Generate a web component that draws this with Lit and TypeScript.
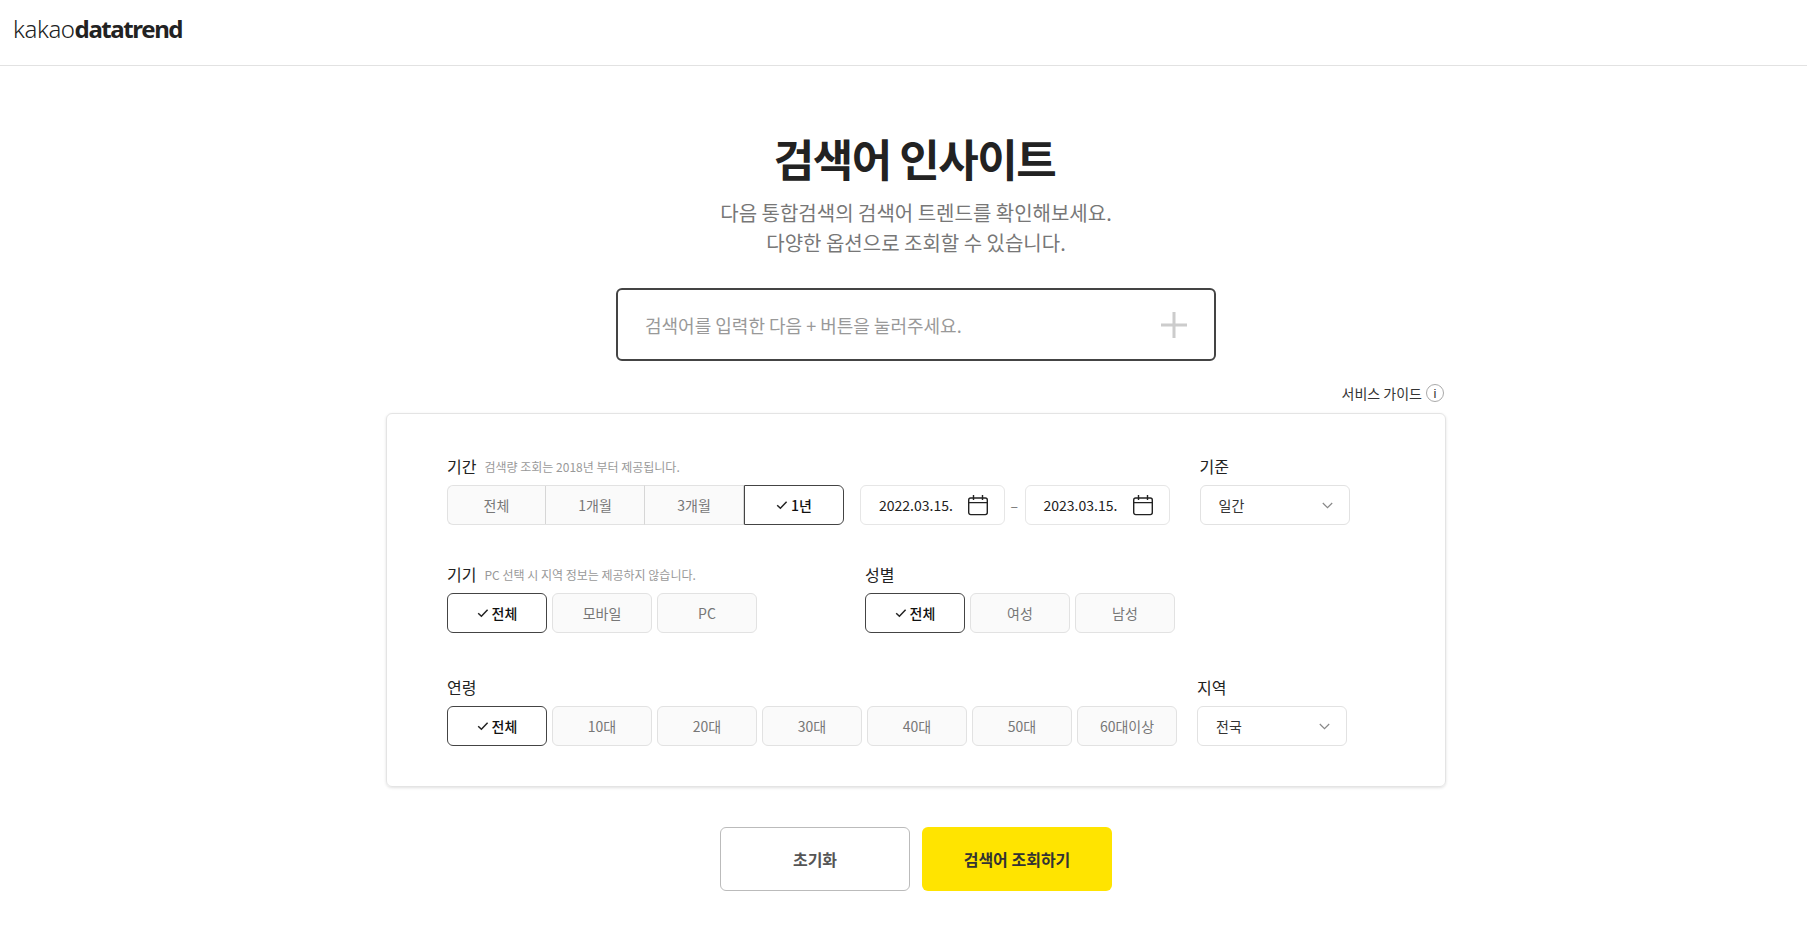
import { LitElement, html, css } from "lit";
import { customElement } from "lit/decorators.js";

const check = html`<svg class="chk" width="12" height="10" viewBox="0 0 12 10" fill="none"><path d="M1.2 5.2 L4.4 8.2 L10.6 1.8" stroke="#222" stroke-width="1.5"/></svg>`;
const chevron = html`<svg class="chev" width="11" height="7" viewBox="0 0 11 7" fill="none"><path d="M.8 1 L5.5 5.7 L10.2 1" stroke="#888" stroke-width="1.2"/></svg>`;
const calendar = html`<svg class="cal" width="22" height="22" viewBox="0 0 22 22" fill="none" stroke="#222" stroke-width="1.4"><rect x="1.7" y="4" width="18.6" height="16.6" rx="2"/><path d="M1.7 8.6 H20.3 M6.5 1 V6 M15.5 1 V6"/></svg>`;

@customElement("app-root")
export class AppRoot extends LitElement {
  static styles = css`
    :host { display: block; font-family: "Noto Sans CJK KR", "Noto Sans", sans-serif; color: #222; background: #fff; }
    * { box-sizing: border-box; }
    header { height: 66px; border-bottom: 1px solid #e2e2e2; padding: 0 0 8px 13px; display: flex; align-items: center; }
    .logo { font-family: "Noto Sans", sans-serif; font-size: 24px; letter-spacing: -0.4px; line-height: 32px; color: #222; font-weight: 300; }
    .logo b { font-weight: 700; letter-spacing: -1.4px; }
    main { width: 1060px; margin-left: 386px; }
    h1 { margin: 62px 0 0; padding-right: 3px; font-size: 44px; line-height: 60px; height: 60px; font-weight: 700; text-align: center; letter-spacing: -1.5px; color: #222; }
    .sub { margin: 10px 0 0; text-align: center; font-size: 20px; line-height: 30px; color: #777; font-weight: 400; }
    .search { width: 600px; height: 73px; margin: 30px auto 0; border: 2px solid #444; border-radius: 6px; display: flex; align-items: center; justify-content: space-between; padding: 0 26px 0 27px; }
    .search span { font-size: 18px; color: #999; }
    .guide { display: flex; justify-content: flex-end; align-items: center; gap: 4px; height: 33px; margin-top: 19px; padding-right: 2px; padding-bottom: 7px; font-size: 14px; color: #333; }
    .card { border: 1px solid #e4e4e4; border-radius: 6px; box-shadow: 0 1px 3px rgba(0,0,0,.12); padding: 40px 60px 39px; height: 374px; }
    .row { display: flex; align-items: flex-start; }
    .r1 { gap: 30px; margin-bottom: 37px; }
    .r2 { gap: 108px; margin-bottom: 42px; }
    .r3 { gap: 20px; }
    .lab { height: 31px; display: flex; align-items: flex-start; gap: 8px; font-size: 16px; line-height: 24px; color: #222; }
    .lab small { font-size: 12px; color: #999; line-height: 26px; }
    .ctl { display: flex; align-items: center; }
    .btns { gap: 5px; }
    .btn { width: 100px; height: 40px; border: 1px solid #e2e2e2; border-radius: 6px; background: #fafafa; color: #777; font-size: 14px; display: flex; align-items: center; justify-content: center; gap: 3px; }
    .btn.on { background: #fff; border-color: #444; color: #111; font-weight: 500; }
    .chk { flex: none; }
    .seg { width: 397px; gap: 0; }
    .seg .btn { width: 99px; border-radius: 0; border-left: none; border-right-color: #d6d6d6; }
    .seg .btn:first-child { border-left: 1px solid #e2e2e2; border-radius: 6px 0 0 6px; }
    .seg .btn:last-child { width: 100px; border-radius: 0 6px 6px 0; border-left: 1px solid #444; border-right-color: #444; }
    .date { width: 145px; height: 40px; border: 1px solid #e6e6e6; border-radius: 6px; display: flex; align-items: center; justify-content: space-between; padding: 0 15px 0 18px; font-size: 14px; color: #222; }
    .dash { width: 19.5px; padding-right: 1px; text-align: center; color: #777; font-size: 14px; }
    .dates { margin-left: 16px; }
    .sel { width: 150px; height: 40px; border: 1px solid #e2e2e2; border-radius: 6px; display: flex; align-items: center; justify-content: space-between; padding: 0 16px 0 18px; font-size: 14px; color: #333; }
    .info { width: 18px; height: 18px; border: 1px solid #aaa; border-radius: 50%; display: flex; align-items: center; justify-content: center; font-size: 13px; font-family: "Liberation Sans", sans-serif; line-height: 1; color: #333; }
    .actions { display: flex; gap: 12px; margin: 40px 0 0 334px; }
    .act { width: 190px; height: 64px; border-radius: 6px; display: flex; align-items: center; justify-content: center; font-size: 16px; font-weight: 700; }
    .reset { border: 1px solid #bbb; color: #555; background: #fff; }
    .go { background: #ffe400; color: #333; }
  `;

  private btns(items: string[], on: string, cls = "btns") {
    return html`<div class="ctl ${cls}">${items.map(i => html`<div class="btn ${i === on ? "on" : ""}">${i === on ? check : ""}<span>${i}</span></div>`)}</div>`;
  }

  render() {
    return html`
      <header><div class="logo">kakao<b>datatrend</b></div></header>
      <main>
        <h1>검색어 인사이트</h1>
        <p class="sub">다음 통합검색의 검색어 트렌드를 확인해보세요.<br>다양한 옵션으로 조회할 수 있습니다.</p>
        <div class="search"><span>검색어를 입력한 다음 + 버튼을 눌러주세요.</span>
          <svg width="28" height="28" viewBox="0 0 28 28"><path d="M14 1 V27 M1 14 H27" stroke="#ccc" stroke-width="3"/></svg></div>
        <div class="guide">서비스 가이드 <span class="info">i</span></div>
        <section class="card">
          <div class="row r1">
            <div>
              <div class="lab">기간 <small>검색량 조회는 2018년 부터 제공됩니다.</small></div>
              <div class="ctl">
                ${this.btns(["전체","1개월","3개월","1년"],"1년","seg")}
                <div class="ctl dates">
                  <div class="date">2022.03.15. ${calendar}</div><div class="dash">–</div><div class="date">2023.03.15. ${calendar}</div>
                </div>
              </div>
            </div>
            <div><div class="lab">기준</div><div class="sel">일간 ${chevron}</div></div>
          </div>
          <div class="row r2">
            <div><div class="lab">기기 <small>PC 선택 시 지역 정보는 제공하지 않습니다.</small></div>${this.btns(["전체","모바일","PC"],"전체")}</div>
            <div><div class="lab">성별</div>${this.btns(["전체","여성","남성"],"전체")}</div>
          </div>
          <div class="row r3">
            <div><div class="lab">연령</div>${this.btns(["전체","10대","20대","30대","40대","50대","60대이상"],"전체")}</div>
            <div><div class="lab">지역</div><div class="sel">전국 ${chevron}</div></div>
          </div>
        </section>
        <div class="actions"><div class="act reset">초기화</div><div class="act go">검색어 조회하기</div></div>
      </main>`;
  }
}
